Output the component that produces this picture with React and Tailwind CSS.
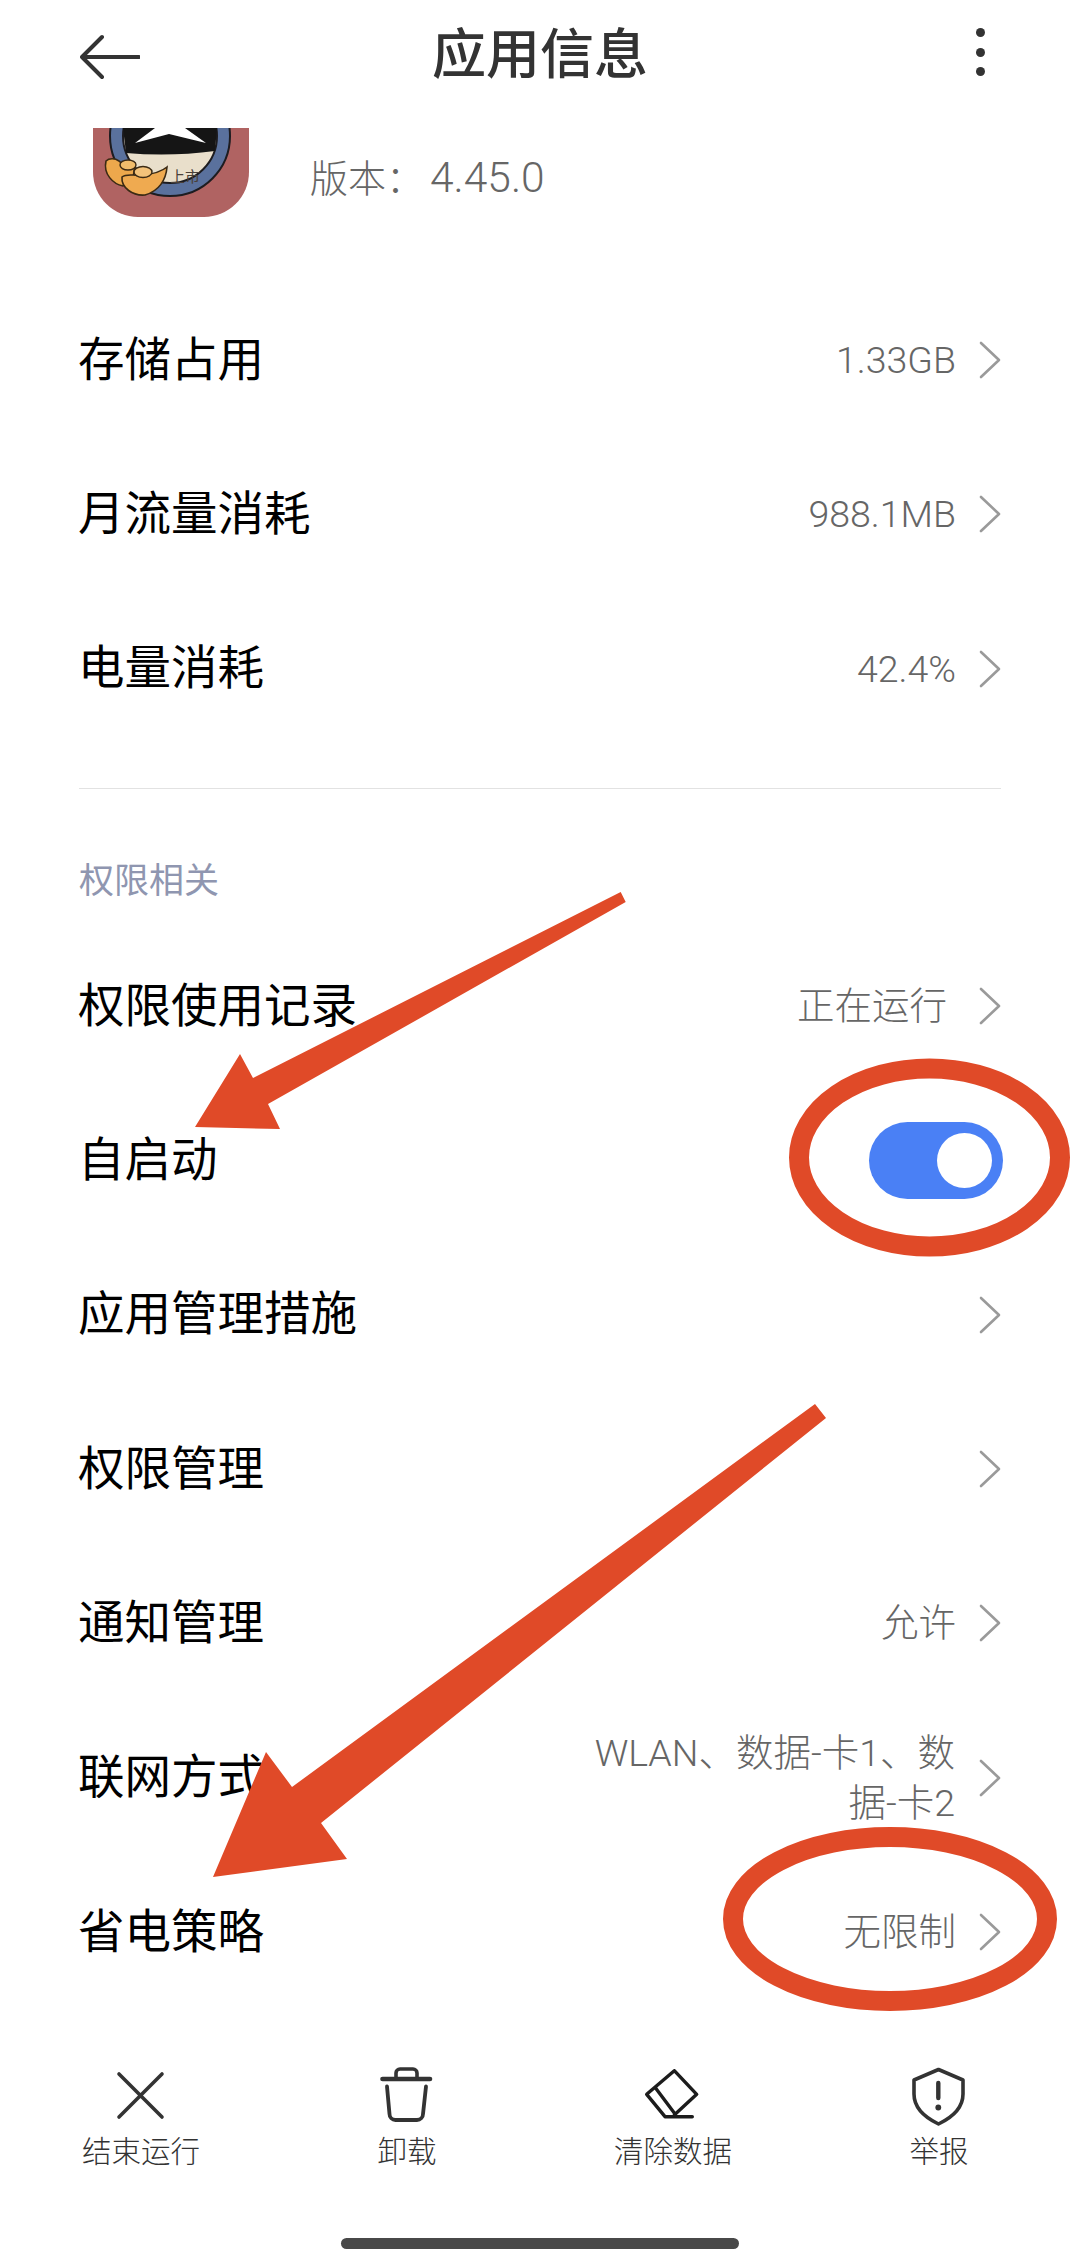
const settingsGroups = {
  usage: [
    { label: '存储占用', value: '1.33GB' },
    { label: '月流量消耗', value: '988.1MB' },
    { label: '电量消耗', value: '42.4%' },
  ],
  permissions: [
    { label: '权限使用记录', value: '正在运行', inset: true },
    { label: '自启动', toggle: true },
    { label: '应用管理措施' },
    { label: '权限管理' },
    { label: '通知管理', value: '允许' },
    { label: '联网方式', lines: ['WLAN、数据-卡1、数据-卡2'] },
    { label: '省电策略', value: '无限制' },
  ],
}

function Chevron() {
  return (
    <svg width="22" height="38" viewBox="0 0 22 38" fill="none" className="shrink-0">
      <path d="M2 2 L20 19 L2 36" stroke="#9a9a9a" strokeWidth="2.6" strokeLinecap="round" strokeLinejoin="round" />
    </svg>
  )
}

function Toggle() {
  return (
    <div className="-mr-[2px] flex h-[77px] w-[134px] items-center justify-end rounded-full bg-[#4a80f5] pr-[11px]">
      <div className="h-[55px] w-[55px] rounded-full bg-white" />
    </div>
  )
}

function SettingRow({ label, value, lines, toggle, inset }) {
  return (
    <div className="flex h-[154.3px] items-center justify-between">
      <span className="-ml-px text-[46.5px] leading-none text-black">{label}</span>
      {toggle ? (
        <Toggle />
      ) : (
        <div className="flex items-center">
          {value && (
            <span className={`text-[37.5px] leading-[50px] font-light text-[#666666] ${inset ? 'mr-[32px]' : 'mr-[23px]'}`}>
              {value}
            </span>
          )}
          {lines && (
            <span className="mr-[24px] w-[380px] text-right text-[37.5px] leading-[50px] font-light text-[#666666]">
              {lines[0]}
            </span>
          )}
          <Chevron />
        </div>
      )}
    </div>
  )
}

// launcher icon, top part scrolled away under the title bar
function AppIcon() {
  return (
    <svg width="156" height="89" viewBox="0 0 156 89" className="shrink-0">
      <path d="M0 0 H156 V44 A45 45 0 0 1 111 89 H45 A45 45 0 0 1 0 44 Z" fill="#b06362" />
      <circle cx="77" cy="8" r="60" fill="#5a719d" stroke="#1d1c20" strokeWidth="2" />
      <circle cx="77" cy="8" r="47" fill="#e9dfcb" stroke="#1d1c20" strokeWidth="2" />
      <path d="M30 0 H124 L122 23 Q77 29 33 25 Z" fill="#151515" />
      <path d="M62 0 L42 15 L76 6 L113 15 L92 0 Z" fill="#ffffff" />
      <text x="77" y="54" fontSize="15" fill="#4a4038" fontFamily="'Noto Sans CJK SC', sans-serif">上市</text>
      <path d="M13 33 C16 30 22 30 26 33 C30 38 36 38 42 38 L40 50 L30 58 C20 56 10 46 13 33 Z" fill="#eda84c" stroke="#3b2a14" strokeWidth="1.6" />
      <ellipse cx="35" cy="37" rx="8" ry="5" fill="#f1bd6c" stroke="#3b2a14" strokeWidth="1.4" />
      <path d="M29 49 C34 45 40 48 50 47 C60 46 68 44 74 39 C73 52 66 63 52 67 C40 68 28 60 29 49 Z" fill="#efaa50" stroke="#3b2a14" strokeWidth="1.6" />
      <ellipse cx="50" cy="44" rx="9" ry="5.5" fill="#f3c27a" stroke="#3b2a14" strokeWidth="1.4" />
    </svg>
  )
}

function ActionIcon({ viewBox, children }) {
  return (
    <svg
      width="90"
      height="70"
      viewBox={viewBox}
      fill="none"
      stroke="#333333"
      strokeLinecap="round"
      strokeLinejoin="round"
    >
      {children}
    </svg>
  )
}

const actions = [
  {
    label: '结束运行',
    icon: (
      <ActionIcon viewBox="0 0 90 70">
        <path d="M23 14 L66 57 M66 14 L23 57" strokeWidth="3.6" />
      </ActionIcon>
    ),
  },
  {
    label: '卸载',
    icon: (
      <ActionIcon viewBox="-3 0 90 70">
        <path d="M17.5 19 H65" strokeWidth="4.6" />
        <path d="M31 18 V13 A4 4 0 0 1 35 9 H48 A4 4 0 0 1 52 13 V18" strokeWidth="3.6" />
        <path d="M22 26.5 L24.5 54 A6 6 0 0 0 30.5 60 H52 A6 6 0 0 0 58 54 L61 26.5" strokeWidth="3.8" />
      </ActionIcon>
    ),
  },
  {
    label: '清除数据',
    icon: (
      <ActionIcon viewBox="-2 0 90 70">
        <path
          d="M44.3 10.7 L66.7 34.3 L44.3 55 M44.3 10.7 L16.7 34.3 L35 56.7 H62.3 M25 27.3 L44.3 53"
          stroke="#1c1c1c"
          strokeWidth="3.4"
        />
      </ActionIcon>
    ),
  },
  {
    label: '举报',
    icon: (
      <ActionIcon viewBox="-1 0 90 70">
        <path d="M43.5 9.5 L68 20 V34 C68 48 56 58 43.5 64 C31 58 19 48 19 34 V20 Z" strokeWidth="3.6" />
        <path d="M43.3 23 V38" strokeWidth="4.4" />
        <circle cx="43.3" cy="47.5" r="2.9" fill="#333333" stroke="none" />
      </ActionIcon>
    ),
  },
]

// red marker strokes drawn on top of the page
function Annotations() {
  return (
    <svg className="pointer-events-none absolute inset-0" width="1080" height="2264" viewBox="0 0 1080 2264">
      <polygon points="620.7,892 253,1078 240,1054 195,1127 280,1129 268,1104 625.7,902" fill="#e04a28" />
      <polygon points="815,1404 292,1787 266,1752 213,1877 347,1859 321,1823 826,1418" fill="#e04a28" />
      <ellipse cx="929.5" cy="1157.5" rx="130.5" ry="89" fill="none" stroke="#e04a28" strokeWidth="20" />
      <ellipse cx="890" cy="1919" rx="157" ry="82" fill="none" stroke="#e04a28" strokeWidth="20" />
    </svg>
  )
}

export default function App() {
  return (
    <div className="relative flex h-[2264px] w-[1080px] flex-col overflow-hidden bg-white font-['Roboto','Noto_Sans_CJK_SC',sans-serif]">
      <header className="flex h-[128px] shrink-0 items-start pr-[95px] pl-[80px] pt-[24px]">
        <div className="flex-1">
          <svg width="60" height="56" viewBox="0 0 60 56" fill="none" className="mt-[5px]">
            <path d="M59 28 H3 M22 8 L2 28 L22 48" stroke="#333333" strokeWidth="4" strokeLinecap="round" strokeLinejoin="round" />
          </svg>
        </div>
        <h1 className="mt-[4px] ml-[15px] text-[54px] leading-[56px] font-medium text-[#333333]">应用信息</h1>
        <div className="flex flex-1 justify-end">
          <div className="mt-[4px] flex h-[48px] flex-col justify-between">
            <span className="h-[9px] w-[9px] rounded-full bg-[#333333]" />
            <span className="h-[9px] w-[9px] rounded-full bg-[#333333]" />
            <span className="h-[9px] w-[9px] rounded-full bg-[#333333]" />
          </div>
        </div>
      </header>

      <section className="flex h-[155px] shrink-0 items-start pl-[93px]">
        <AppIcon />
        <p className="mt-[27px] ml-[61px] flex items-baseline text-[38px] leading-[46px] font-light text-[#666666]">
          版本：<span className="ml-[6px] text-[42.5px]">4.45.0</span>
        </p>
      </section>

      <div className="px-[79px]">
        {settingsGroups.usage.map((row) => (
          <SettingRow key={row.label} {...row} />
        ))}
        <div className="mt-[42px] h-px bg-[#e2e2e2]" />
        <p className="mt-[75px] h-[65px] text-[35px] leading-[36px] text-[#8f96b0]">权限相关</p>
        {settingsGroups.permissions.map((row) => (
          <SettingRow key={row.label} {...row} />
        ))}
      </div>

      <footer className="absolute inset-x-0 bottom-0 flex flex-col items-center">
        <div className="grid w-full grid-cols-4 px-[8px]">
          {actions.map((action) => (
            <div key={action.label} className="flex flex-col items-center">
              {action.icon}
              <span className="mt-[2px] text-[29.5px] leading-[40px] font-light text-[#333333]">{action.label}</span>
            </div>
          ))}
        </div>
        <div className="mt-[66px] mb-[15px] h-[11px] w-[398px] rounded-full bg-[#484848]" />
      </footer>

      <Annotations />
    </div>
  )
}
